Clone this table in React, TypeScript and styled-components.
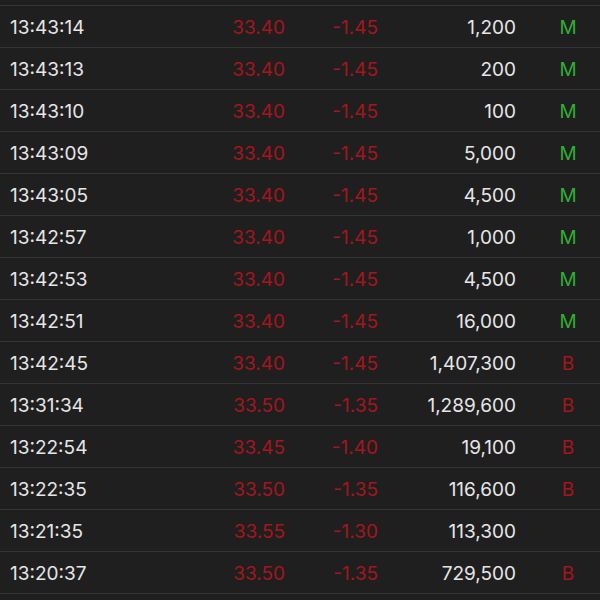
import React from 'react'
import styled, { createGlobalStyle } from 'styled-components'

type Side = 'M' | 'B' | ''

interface Trade {
  time: string
  price: string
  change: string
  volume: string
  side: Side
}

const trades: Trade[] = [
  { time: '13:43:14', price: '33.40', change: '-1.45', volume: '1,200', side: 'M' },
  { time: '13:43:13', price: '33.40', change: '-1.45', volume: '200', side: 'M' },
  { time: '13:43:10', price: '33.40', change: '-1.45', volume: '100', side: 'M' },
  { time: '13:43:09', price: '33.40', change: '-1.45', volume: '5,000', side: 'M' },
  { time: '13:43:05', price: '33.40', change: '-1.45', volume: '4,500', side: 'M' },
  { time: '13:42:57', price: '33.40', change: '-1.45', volume: '1,000', side: 'M' },
  { time: '13:42:53', price: '33.40', change: '-1.45', volume: '4,500', side: 'M' },
  { time: '13:42:51', price: '33.40', change: '-1.45', volume: '16,000', side: 'M' },
  { time: '13:42:45', price: '33.40', change: '-1.45', volume: '1,407,300', side: 'B' },
  { time: '13:31:34', price: '33.50', change: '-1.35', volume: '1,289,600', side: 'B' },
  { time: '13:22:54', price: '33.45', change: '-1.40', volume: '19,100', side: 'B' },
  { time: '13:22:35', price: '33.50', change: '-1.35', volume: '116,600', side: 'B' },
  { time: '13:21:35', price: '33.55', change: '-1.30', volume: '113,300', side: '' },
  { time: '13:20:37', price: '33.50', change: '-1.35', volume: '729,500', side: 'B' },
]

const GlobalStyle = createGlobalStyle`
  html, body {
    margin: 0;
    background: #1f1f1f;
  }
`

const List = styled.div`
  width: 600px;
  height: 600px;
  overflow: hidden;
  background: #1f1f1f;
  padding-top: 5px;
  box-sizing: border-box;
  font-family: Inter, 'Liberation Sans', sans-serif;
  font-size: 19px;
`

const Row = styled.div`
  display: grid;
  grid-template-columns: 189px 86px 93px 138px 104px;
  align-items: center;
  height: 41px;
  border-top: 1px solid #333335;
  padding-left: 10px;
  padding-top: 1px;
  box-sizing: content-box;
  height: 40px;
  &:last-child {
    border-bottom: 1px solid #333335;
  }
`

const Time = styled.span`
  color: #e6e6e6;
`

const Num = styled.span<{ $red?: boolean }>`
  text-align: right;
  color: ${(p) => (p.$red ? '#a3161d' : '#e6e6e6')};
`

const Side = styled.span<{ $side: Side }>`
  text-align: center;
  color: ${(p) => (p.$side === 'M' ? '#2fae33' : '#a3161d')};
`

export default function App() {
  return (
    <>
      <GlobalStyle />
      <List>
        {trades.map((t) => (
          <Row key={t.time}>
            <Time>{t.time}</Time>
            <Num $red>{t.price}</Num>
            <Num $red>{t.change}</Num>
            <Num>{t.volume}</Num>
            <Side $side={t.side}>{t.side}</Side>
          </Row>
        ))}
      </List>
    </>
  )
}
